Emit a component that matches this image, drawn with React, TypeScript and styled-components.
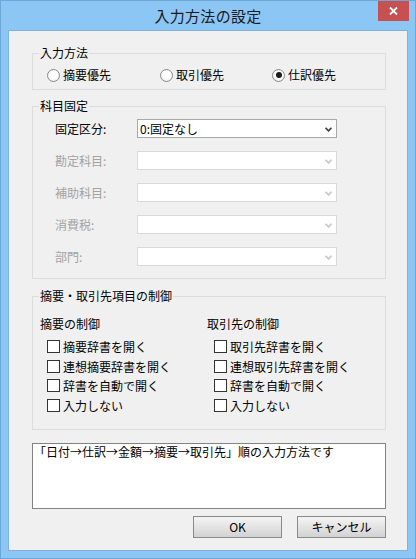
import React from 'react';
import styled, { createGlobalStyle } from 'styled-components';

const GlobalStyle = createGlobalStyle`
  html, body {
    margin: 0;
    padding: 0;
    background: #8cc6f5;
  }
  body {
    font-family: "Noto Sans CJK JP", "Noto Sans", sans-serif;
    font-size: 12px;
    color: #000;
  }
`

const Window = styled.div`
  box-sizing: border-box;
  width: 416px;
  height: 559px;
  background: #8cc6f5;
  border: 1px solid #6fa6da;
  padding: 0 7px 7px;
  display: flex;
  flex-direction: column;
`
const TitleBar = styled.div`
  height: 29px;
  margin: 0 -7px;
  display: grid;
  grid-template-columns: 1fr auto 1fr;
`
const Title = styled.div`
  grid-column: 2;
  line-height: 29px;
  font-size: 15px;
  color: #1a1a1a;
  letter-spacing: 0.3px;
`
const CloseButton = styled.div`
  grid-column: 3;
  justify-self: end;
  width: 31px;
  height: 20px;
  margin-right: 6px;
  background: #c75050;
  display: flex;
  align-items: center;
  justify-content: center;
`
const Client = styled.div`
  flex: 1;
  box-sizing: border-box;
  background: #f0f0f0;
  border: 1px solid #7fb0e0;
  padding: 15px 21px 0 23px;
  display: flex;
  flex-direction: column;
`
const Group = styled.fieldset<{ $mt: number; $pt: number; $pb: number }>`
  margin: ${p => p.$mt}px 0 0;
  padding: ${p => p.$pt}px 0 ${p => p.$pb}px 6px;
  border: 1px solid #dcdcdc;
  min-width: 0;
`
const Legend = styled.legend`
  padding: 0 1px;
  line-height: 14px;
  font-size: 12px;
`
const RadioRow = styled.div`
  display: grid;
  grid-template-columns: 113px 112px 1fr;
  margin-left: 8px;
  height: 14px;
`
const Option = styled.label`
  display: flex;
  align-items: center;
  gap: 3px;
  line-height: 14px;
  white-space: nowrap;
`
const RadioCircle = styled.span<{ $checked?: boolean }>`
  box-sizing: border-box;
  width: 13px;
  height: 13px;
  border-radius: 50%;
  border: 1px solid #8a8a8a;
  background: radial-gradient(circle at 50% 40%, #ffffff 40%, #e4e4e4 100%);
  display: flex;
  align-items: center;
  justify-content: center;
  &::after {
    content: '';
    display: ${p => (p.$checked ? 'block' : 'none')};
    width: 6px;
    height: 6px;
    border-radius: 50%;
    background: #1c1c1c;
  }
`
const FieldList = styled.div`
  display: flex;
  flex-direction: column;
  gap: 13px;
  margin-left: 16px;
`
const FieldRow = styled.div`
  display: grid;
  grid-template-columns: 82px 200px;
  align-items: center;
  height: 19px;
`
const FieldLabel = styled.span<{ $disabled?: boolean }>`
  color: ${p => (p.$disabled ? '#a3a3a3' : '#000')};
  line-height: 14px;
`
const Combo = styled.div<{ $disabled?: boolean }>`
  box-sizing: border-box;
  width: 200px;
  height: 19px;
  background: #fff;
  border: 1px solid ${p => (p.$disabled ? '#d9d9d9' : '#a8a8a8')};
  display: flex;
  align-items: center;
  justify-content: space-between;
  padding: 0 4px 0 2px;
  line-height: 14px;
  svg {
    margin-top: 1px;
  }
`
const Columns = styled.div`
  display: grid;
  grid-template-columns: 167px 1fr;
  margin-left: 1px;
`
const SubHeading = styled.div`
  line-height: 14px;
`
const CheckList = styled.div`
  display: flex;
  flex-direction: column;
  gap: 6.67px;
  margin: 9px 0 0 7px;
`
const CheckOption = styled.label`
  display: flex;
  align-items: center;
  gap: 3px;
  height: 13px;
  line-height: 13px;
  white-space: nowrap;
`
const CheckBox = styled.span`
  box-sizing: border-box;
  width: 13px;
  height: 13px;
  border: 1px solid #333;
  background: #fff;
`
const Memo = styled.div`
  box-sizing: border-box;
  margin-top: 13px;
  height: 66px;
  background: #fff;
  border: 1px solid #828282;
  padding: 1px 1px;
  line-height: 14px;
`
const ButtonBar = styled.div`
  display: flex;
  justify-content: flex-end;
  gap: 15px;
  margin-top: 7px;
`
const Button = styled.div`
  box-sizing: border-box;
  width: 89px;
  height: 22px;
  border: 1px solid #8a8a8a;
  background: linear-gradient(#f4f4f4, #e2e2e2 55%, #d2d2d2);
  display: flex;
  align-items: center;
  justify-content: center;
  line-height: 14px;
`

const Chevron: React.FC<{ disabled?: boolean }> = ({ disabled }) => (
  <svg width="7" height="5" viewBox="0 0 7 5">
    <polyline
      points="0.5,0.8 3.5,3.8 6.5,0.8"
      fill="none"
      stroke={disabled ? '#c8c8c8' : '#444'}
      strokeWidth="1.8"
    />
  </svg>
)

const fields = [
  { label: '固定区分:', value: '0:固定なし', disabled: false },
  { label: '勘定科目:', value: '', disabled: true },
  { label: '補助科目:', value: '', disabled: true },
  { label: '消費税:', value: '', disabled: true },
  { label: '部門:', value: '', disabled: true },
]

const controls = [
  { heading: '摘要の制御', items: ['摘要辞書を開く', '連想摘要辞書を開く', '辞書を自動で開く', '入力しない'] },
  { heading: '取引先の制御', items: ['取引先辞書を開く', '連想取引先辞書を開く', '辞書を自動で開く', '入力しない'] },
]

export default function App() {
  return (
    <>
      <GlobalStyle />
      <Window>
        <TitleBar>
          <Title>入力方法の設定</Title>
          <CloseButton>
            <svg width="9" height="8" viewBox="0 0 9 8">
              <path d="M1 0.5 L8 7.5 M8 0.5 L1 7.5" stroke="#fff" strokeWidth="1.8" />
            </svg>
          </CloseButton>
        </TitleBar>
        <Client>
          <Group $mt={0} $pt={8} $pb={7}>
            <Legend>入力方法</Legend>
            <RadioRow>
              <Option><RadioCircle />摘要優先</Option>
              <Option><RadioCircle />取引優先</Option>
              <Option><RadioCircle $checked />仕訳優先</Option>
            </RadioRow>
          </Group>

          <Group $mt={9} $pt={6} $pb={12}>
            <Legend>科目固定</Legend>
            <FieldList>
              {fields.map(f => (
                <FieldRow key={f.label}>
                  <FieldLabel $disabled={f.disabled}>{f.label}</FieldLabel>
                  <Combo $disabled={f.disabled}>
                    <span>{f.value}</span>
                    <Chevron disabled={f.disabled} />
                  </Combo>
                </FieldRow>
              ))}
            </FieldList>
          </Group>

          <Group $mt={10} $pt={14} $pb={17}>
            <Legend>摘要・取引先項目の制御</Legend>
            <Columns>
              {controls.map(c => (
                <div key={c.heading}>
                  <SubHeading>{c.heading}</SubHeading>
                  <CheckList>
                    {c.items.map(item => (
                      <CheckOption key={item}>
                        <CheckBox />
                        {item}
                      </CheckOption>
                    ))}
                  </CheckList>
                </div>
              ))}
            </Columns>
          </Group>

          <Memo>「日付→仕訳→金額→摘要→取引先」順の入力方法です</Memo>

          <ButtonBar>
            <Button>OK</Button>
            <Button>キャンセル</Button>
          </ButtonBar>
        </Client>
      </Window>
    </>
  )
}
